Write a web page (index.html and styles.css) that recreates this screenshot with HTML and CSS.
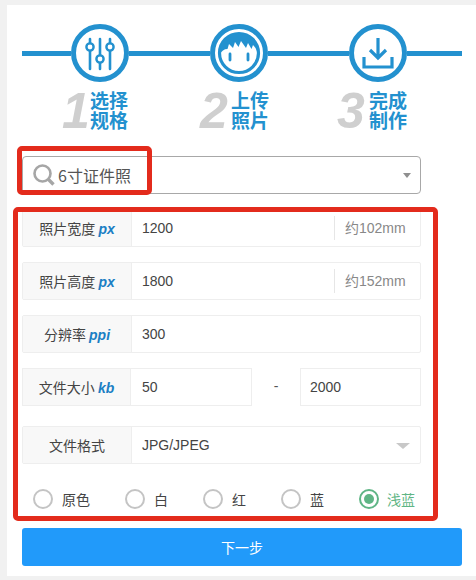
FILE: index.html
```html
<!DOCTYPE html>
<html lang="zh">
<head>
<meta charset="utf-8">
<title>下一步</title>
<link rel="stylesheet" href="styles.css">
</head>
<body>
<main class="panel">
  <section class="track">
    <span class="seg seg-a"></span>
    <svg class="icon" viewBox="0 0 58 58" fill="none" stroke="#2391cf" stroke-width="5">
      <circle cx="29" cy="29" r="26.5"/>
      <g stroke-width="2.4" stroke-linecap="round">
        <path d="M19 15v4M19 27v18M29 15v16M29 39v6M39 15v4M39 27v18" stroke-width="2.6"/>
        <circle cx="19" cy="23" r="3.6"/><circle cx="29" cy="35" r="3.6"/><circle cx="39" cy="23" r="3.6"/>
      </g>
    </svg>
    <span class="seg seg-b"></span>
    <svg class="icon" viewBox="0 0 58 58" fill="none" stroke="#2391cf" stroke-width="5">
      <circle cx="29" cy="29" r="26.500"/>
      <circle cx="29" cy="29" r="19.500" stroke-width="3.200"/>
      <path d="M10 30C9.500 17 18 9 29 9S48.500 17 48 30C47 26 45 23 43 21L41.500 25 38 19 36 24 31 17 28.500 23 25 18 23 24 19 20 17.500 25C14 25 11.500 27 10 30Z" fill="#2391cf" stroke="none"/>
      <path d="M20 30v6M38 30v6" stroke-width="2.800" stroke-linecap="round"/>
    </svg>
    <span class="seg seg-b"></span>
    <svg class="icon" viewBox="0 0 58 58" fill="none" stroke="#2391cf" stroke-width="5">
      <circle cx="29" cy="29" r="26.500"/>
      <path d="M29 14v20M21 26l8 8 8-8M15 33v10h28V33" stroke-width="3.200"/>
    </svg>
    <span class="seg seg-c"></span>
  </section>

  <section class="captions">
    <div class="caption c1"><span class="num">1</span><span class="cap-text">选择<br>规格</span></div>
    <div class="caption c2"><span class="num">2</span><span class="cap-text">上传<br>照片</span></div>
    <div class="caption c3"><span class="num">3</span><span class="cap-text">完成<br>制作</span></div>
  </section>

  <div class="form">
    <div class="select">
      <svg class="search" viewBox="0 0 22 22" fill="none" stroke="#a6a6a6">
        <circle cx="9.500" cy="9.500" r="8" stroke-width="2.600"/>
        <path d="M15.500 15.500l5 5" stroke-width="3.400"/>
      </svg>
      <span class="select-text">6寸证件照</span>
      <span class="caret caret-small"></span>
    </div>

    <div class="rows">
      <div class="row">
        <div class="label">照片宽度 <b>px</b></div>
        <div class="value grow">1200</div>
        <div class="unit"><span>约102mm</span></div>
      </div>
      <div class="row">
        <div class="label">照片高度 <b>px</b></div>
        <div class="value grow">1800</div>
        <div class="unit"><span>约152mm</span></div>
      </div>
      <div class="row">
        <div class="label">分辨率 <b>ppi</b></div>
        <div class="value grow">300</div>
      </div>
      <div class="row split">
        <div class="label">文件大小 <b>kb</b></div>
        <div class="value half">50</div>
        <div class="dash">-</div>
        <div class="value half">2000</div>
      </div>
      <div class="row format">
        <div class="label">文件格式</div>
        <div class="value grow">JPG/JPEG</div>
        <span class="caret caret-large"></span>
      </div>
    </div>

    <div class="radios">
      <label class="radio"><i class="dot"></i>原色</label>
      <label class="radio"><i class="dot"></i>白</label>
      <label class="radio"><i class="dot"></i>红</label>
      <label class="radio"><i class="dot"></i>蓝</label>
      <label class="radio on"><i class="dot"></i>浅蓝</label>
    </div>

    <button class="next" type="button">下一步</button>

    <div class="mark mark-a"></div>
    <div class="mark mark-b"></div>
  </div>
</main>
</body>
</html>
```
FILE: styles.css
```css
* { box-sizing: border-box; }
html, body { margin: 0; height: 580px; overflow: hidden; }
body {
  background: #f1f1f1;
  padding: 5px 0 0 7px;
  font-family: "Liberation Sans", "Noto Sans CJK SC", sans-serif;
  color: #444;
  font-size: 14px;
}
.panel { background: #fff; height: 571px; padding: 19px 14px 0 15px; }

.track { display: flex; align-items: center; width: 440px; height: 58px; }
.icon { width: 58px; height: 58px; flex: none; }
.seg { height: 5px; background: #2391cf; }
.seg-a { width: 49px; }
.seg-b { width: 81px; }
.seg-c { width: 55px; }

.captions { display: flex; height: 50px; margin-top: 1px; }
.caption { display: flex; align-items: flex-end; flex: none; }
.c1 { margin-left: 40px; }
.c2 { margin-left: 72px; }
.c3 { margin-left: 68px; }
.num {
  font: italic bold 50px/44px "Liberation Sans", sans-serif;
  color: #cfcfcf;
  width: 26px;
  text-align: right;
  margin-right: 2px;
}
.c2 .num, .c3 .num { width: 30px; text-align: left; margin-right: 1px; }
.c3 .num { margin-right: 2px; }
.cap-text {
  font: 700 19px/20px "Noto Sans CJK SC", sans-serif;
  color: #2391cf;
  padding-bottom: 3px;
}

.form { position: relative; width: 440px; margin-top: 23px; }
.select {
  display: flex;
  align-items: center;
  width: 399px;
  height: 38px;
  border: 1px solid #a8a8a8;
  border-radius: 4px;
  padding: 0 9px 0 10px;
  position: relative;
}
.search { width: 22px; height: 22px; flex: none; margin-right: 3px; }
.select-text { font: 16px "Noto Sans CJK SC", sans-serif; color: #555; flex: 1; }
.caret { width: 0; height: 0; border-style: solid; border-color: #8f8f8f transparent transparent; }
.caret-small { border-width: 5px 4px 0; }
.caret-large { border-width: 6px 7px 0; border-top-color: #c8c8c8; position: absolute; right: 10px; top: 16px; }

.rows { display: flex; flex-direction: column; gap: 15px; width: 399px; margin-top: 15px; }
.row {
  display: flex;
  height: 38px;
  border: 1px solid #eee;
  border-radius: 2px;
  position: relative;
}
.row.split { border: 0; }
.row.format { margin-top: 5px; }
.label {
  flex: none;
  width: 109px;
  background: #f8f8f8;
  border-right: 1px solid #eee;
  font: 14px/36px "Noto Sans CJK SC", sans-serif;
  text-align: center;
  color: #444;
}
.split .label { border: 1px solid #eee; }
.label b {
  font: italic bold 14px "Liberation Sans", sans-serif;
  color: #1b7fc4;
}
.value { padding-left: 10px; font: 14px/36px "Liberation Sans", sans-serif; color: #444; }
.grow { flex: 1; }
.half { width: 121px; flex: none; border: 1px solid #eee; border-left: 0; padding-left: 11px; }
.half:last-child { border-left: 1px solid #eee; padding-left: 9px; }
.dash { flex: 1; text-align: center; font: 14px/36px "Liberation Sans", sans-serif; color: #555; }
.unit { display: flex; align-items: center; flex: none; width: 86px; height: 36px; font-size: 14px; color: #888; }
.unit span { display: block; width: 100%; border-left: 1px solid #e6e6e6; padding-left: 10px; line-height: 24px; white-space: nowrap; }

.radios { display: flex; gap: 35px; margin-top: 25px; padding-left: 11px; height: 20px; }
.radio { display: flex; align-items: center; font: 14px/20px "Noto Sans CJK SC", sans-serif; color: #444; }
.dot {
  width: 20px;
  height: 20px;
  border-radius: 50%;
  border: 2px solid #c4c4c4;
  margin-right: 9px;
  flex: none;
}
.radio.on { color: #5fb585; }
.radio.on .dot { border-color: #5fb585; margin-right: 8px; position: relative; }
.radio.on .dot::after {
  content: "";
  position: absolute;
  left: 3px;
  top: 3px;
  width: 10px;
  height: 10px;
  border-radius: 50%;
  background: #5fb585;
}

.next {
  display: block;
  width: 440px;
  height: 38px;
  margin-top: 19px;
  border: 0;
  border-radius: 3px;
  background: #219afa;
  color: #fff;
  font: 14px "Noto Sans CJK SC", sans-serif;
}

.mark { position: absolute; border: 5px solid #e32b1c; border-radius: 5px; pointer-events: none; }
.mark-a { left: -5px; top: -10px; width: 135px; height: 49px; }
.mark-b { left: -9px; top: 51px; width: 425px; height: 314px; }
```
